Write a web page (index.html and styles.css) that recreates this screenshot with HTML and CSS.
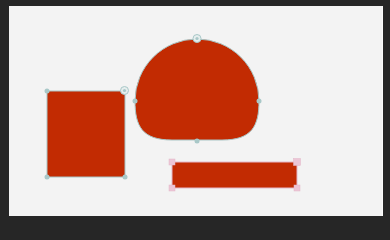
FILE: index.html
```html
<!DOCTYPE html>
<html>
<head>
<meta charset="utf-8">
<link rel="stylesheet" href="styles.css">
</head>
<body>
<div class="stage">
  <div class="canvas">
    <svg class="drawing" viewBox="9 6 374 210" width="374" height="210" xmlns="http://www.w3.org/2000/svg">
      <!-- rectangle -->
      <rect class="shape" x="47" y="91" width="78" height="86" rx="2"/>
      <circle class="dot" cx="47" cy="91" r="2.5"/>
      <circle class="dot" cx="47" cy="177" r="2.5"/>
      <circle class="dot" cx="125" cy="177" r="2.5"/>
      <circle class="ring" cx="124.5" cy="90.5" r="4"/>
      <circle class="dot" cx="124.5" cy="90.5" r="1.6"/>
      <!-- dome -->
      <path class="shape" d="M135,101 A62,62 0 0 1 259,101 C259,126 252,140 222,140 L172,140 C142,140 135,126 135,101 Z"/>
      <circle class="dot" cx="135" cy="101" r="2.5"/>
      <circle class="dot" cx="259" cy="101" r="2.5"/>
      <circle class="dot" cx="197" cy="141" r="2.5"/>
      <circle class="ring" cx="197" cy="38.5" r="4"/>
      <circle class="dot" cx="197" cy="38.5" r="1.6"/>
      <!-- bar -->
      <rect class="shape pinkline" x="172" y="162" width="125" height="26"/>
      <rect class="pinkhandle" x="169" y="159" width="6" height="6"/>
      <rect class="pinkhandle" x="293.5" y="158.5" width="7" height="7"/>
      <rect class="pinkhandle" x="169" y="185" width="6" height="6"/>
      <rect class="pinkhandle" x="294" y="185" width="6" height="6"/>
    </svg>
  </div>
</div>
</body>
</html>
```
FILE: styles.css
```css
html, body {
  margin: 0;
  padding: 0;
  background: #262626;
  width: 390px;
  height: 225px;
  overflow: hidden;
}
.stage {
  padding: 6px 0 0 9px;
  border-top: 0;
}
.canvas {
  width: 373px;
  height: 210px;
  background: #f3f3f3;
  border-right: 1px solid #fbfbfb;
}
.drawing {
  display: block;
}
.shape {
  fill: #c22b02;
  stroke: #a9c5c5;
  stroke-width: 1;
}
.pinkline {
  stroke: #e5b9c9;
}
.dot {
  fill: #a9c8c8;
}
.ring {
  fill: #e6eeee;
  stroke: #a9c8c8;
  stroke-width: 1;
}
.pinkhandle {
  fill: #ecc6d6;
  stroke: #e4b6c8;
  stroke-width: 0.5;
}
```
